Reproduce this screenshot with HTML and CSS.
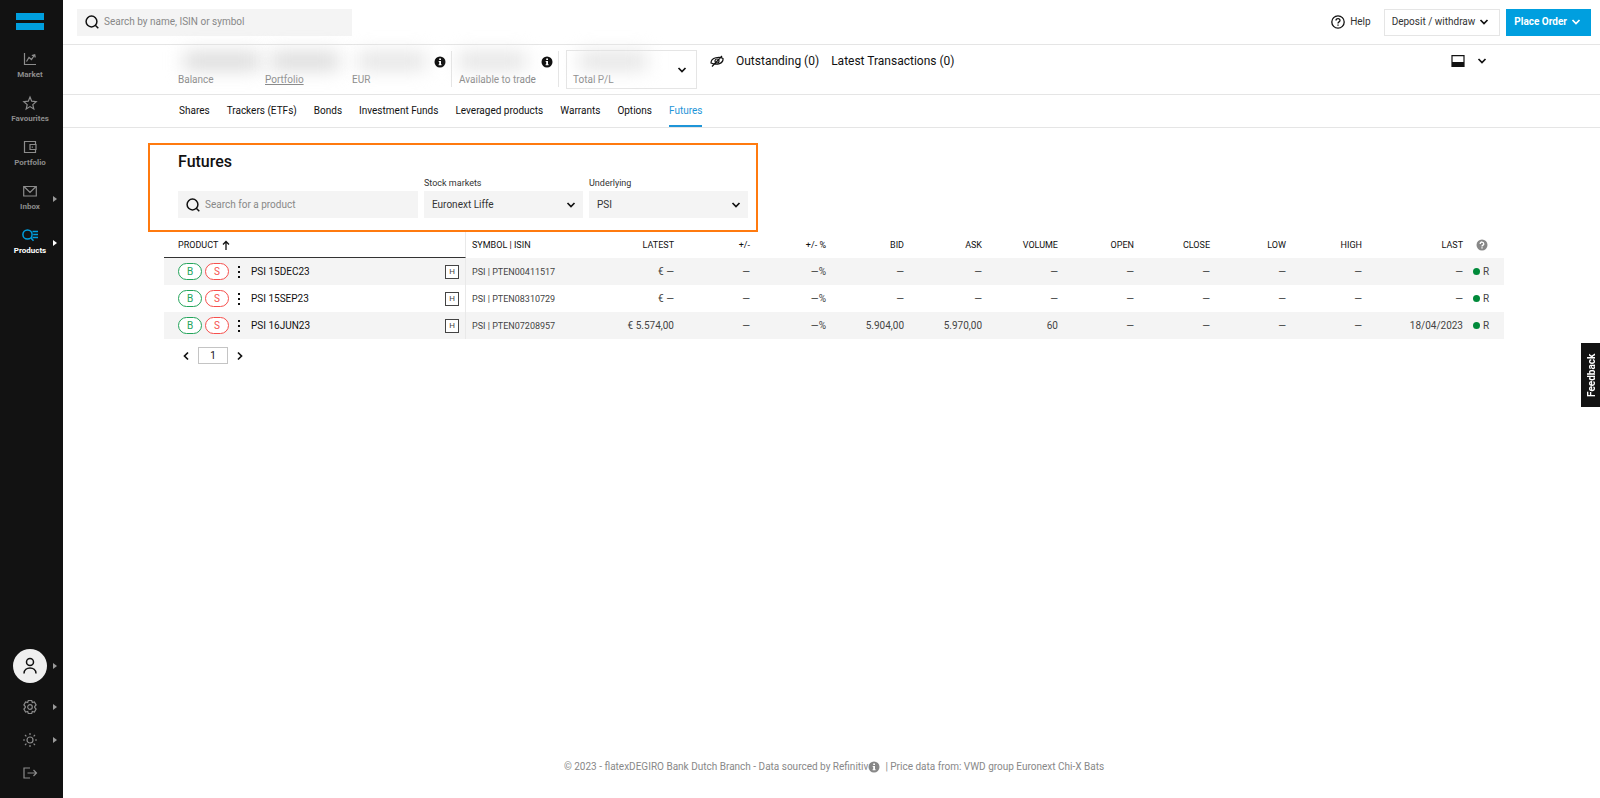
FILE: index.html
```html
<!DOCTYPE html>
<html lang="en">
<head>
<meta charset="utf-8">
<title>Futures</title>
<link rel="stylesheet" href="styles.css">
</head>
<body>
<svg class="defs" aria-hidden="true">
  <symbol id="chevron" viewBox="0 0 10 10"><path d="M1.500 3 5 6.500 8.500 3" fill="none" stroke="currentColor" stroke-width="1.700"/></symbol>
  <symbol id="search" viewBox="0 0 14 14"><circle cx="6.500" cy="6.500" r="5.400" fill="none" stroke="currentColor" stroke-width="1.500"/><path d="m10 10 3.300 3.200" stroke="currentColor" stroke-width="1.500"/></symbol>
  <symbol id="info" viewBox="0 0 12 12"><circle cx="6" cy="6" r="5.500" fill="currentColor"/><path d="M5.200 2.500h1.800v1.500H5.200zM4.700 5h2.300v3.300h.6v1H4.600v-1h.6V6h-.5z" fill="#fff"/></symbol>
</svg>
<div class="app">
  <nav class="sidebar" aria-label="Main">
    <a class="logo" href="#" aria-label="Home"><span class="logo-bar"></span><span class="logo-bar"></span></a>
    <a class="nav-item" href="#">
      <svg class="nav-icon" viewBox="0 0 16 16"><path d="M2.500 2v11.500H14M4.500 10.500l2.500-4 2.500 2L12.500 4M9.800 4.500l2.900-.8.600 2.800" /></svg>Market</a>
    <a class="nav-item" href="#">
      <svg class="nav-icon" viewBox="0 0 16 16"><path d="m8 2 1.700 4.200 4.500.4-3.400 3 1 4.300L8 11.600l-3.800 2.300 1-4.300-3.400-3 4.500-.4z"/></svg>Favourites</a>
    <a class="nav-item" href="#">
      <svg class="nav-icon" viewBox="0 0 16 16"><path d="M13.500 5.500v-3h-11v11h11v-3M14 5.500H8v5h6zM10.300 7.500v1.200"/></svg>Portfolio</a>
    <a class="nav-item has-more" href="#">
      <svg class="nav-icon" viewBox="0 0 16 16"><path d="M1.700 3.500h12.600v9.500H1.700zM2.500 4 8 9.500 13.500 4"/></svg>Inbox</a>
    <a class="nav-item has-more current" href="#" aria-current="page">
      <svg class="nav-icon" viewBox="0 0 16 16"><circle cx="5.500" cy="7.500" r="4.600"/><path d="m9 11 2.500 2.800M10.500 4.500H16M11.200 7.500H16M10.500 10.500H16"/></svg>Products</a>
    <div class="nav-bottom">
      <a class="tool avatar-row has-more" href="#" aria-label="Account"><span class="avatar"><svg viewBox="0 0 18 18"><circle cx="9" cy="5" r="3.500"/><path d="M3 16.500c0-7.300 12-7.300 12 0"/></svg></span></a>
      <a class="tool has-more" href="#" aria-label="Settings"><svg class="nav-icon" viewBox="0 0 16 16"><path d="M6.300 1.500h3.400l.6 2 2.100-.5 1.700 3L12.700 7.500v1l1.400 1.500-1.700 3-2.100-.5-.6 2H6.300l-.6-2-2.100.5-1.700-3 1.400-1.500v-1L1.900 6l1.700-3 2.100.5z"/><circle cx="8" cy="8" r="2.300"/></svg></a>
      <a class="tool has-more" href="#" aria-label="Theme"><svg class="nav-icon" viewBox="0 0 16 16"><circle cx="8" cy="8" r="3"/><path d="M8 1v2M8 13v2M1 8h2M13 8h2M3 3l1.400 1.400M11.600 11.600 13 13M13 3l-1.400 1.400M4.400 11.600 3 13"/></svg></a>
      <a class="tool" href="#" aria-label="Log out"><svg class="nav-icon" viewBox="0 0 16 16"><path d="M8 3H2v10h6M5.500 8H14.500M11.500 5l3 3-3 3"/></svg></a>
    </div>
  </nav>
  <div class="page">
    <header class="topbar">
      <label class="field global-search"><svg class="i14"><use href="#search"/></svg><input class="field-input" type="text" aria-label="Search" placeholder="Search by name, ISIN or symbol"></label>
      <div class="top-actions">
        <a class="help" href="#"><svg class="i14" viewBox="0 0 14 14" fill="none" stroke="currentColor" stroke-width="1.300"><circle cx="7" cy="7" r="6.200"/><path d="M5 5.500c0-2.500 4-2.500 4 0C9 7 7 6.800 7 8.400M7 9.500v1.300"/></svg>Help</a>
        <button class="btn" type="button">Deposit / withdraw<svg class="i10"><use href="#chevron"/></svg></button>
        <button class="btn btn-primary" type="button">Place Order<svg class="i10"><use href="#chevron"/></svg></button>
      </div>
    </header>
    <section class="account" aria-label="Account summary">
      <div class="stat"><span class="masked masked-wide"></span>Balance</div>
      <div class="stat"><span class="masked"></span><a href="#">Portfolio</a></div>
      <div class="stat stat-ruled"><span class="masked masked-light"></span><svg class="i12 stat-info"><use href="#info"/></svg>EUR</div>
      <div class="stat stat-ruled"><span class="masked masked-light"></span><svg class="i12 stat-info"><use href="#info"/></svg>Available to trade</div>
      <button class="total" type="button"><span class="total-text"><span class="masked masked-light"></span>Total P/L</span><svg class="i10"><use href="#chevron"/></svg></button>
      <div class="account-links">
        <svg class="i14" viewBox="0 0 14 14" fill="none" stroke="currentColor" stroke-width="1.200"><path d="M1 9c0-6 9-6.500 12-4.500C13.500 9.500 7 11.500 1 9zM2 12.500 12 2"/><circle cx="7" cy="7" r="2"/></svg>
        <a href="#">Outstanding (0)</a>
        <a href="#">Latest Transactions (0)</a>
      </div>
      <button class="layout-switch" type="button" aria-label="Layout"><svg class="i14" viewBox="0 0 14 14"><path d="M1 1.600h12v10.800H1z" fill="none" stroke="currentColor" stroke-width="1.200"/><path d="M1 8h12v5H1z" fill="currentColor"/></svg><svg class="i10"><use href="#chevron"/></svg></button>
    </section>
    <nav class="tabs" aria-label="Products">
      <a href="#">Shares</a><a href="#">Trackers (ETFs)</a><a href="#">Bonds</a><a href="#">Investment Funds</a><a href="#">Leveraged products</a><a href="#">Warrants</a><a href="#">Options</a><a class="active" href="#">Futures</a>
    </nav>
    <main class="content">
      <section class="filters">
        <h1>Futures</h1>
        <div class="filter-row">
          <label class="field product-search"><svg class="i14"><use href="#search"/></svg><input class="field-input" type="text" aria-label="Search for a product" placeholder="Search for a product"></label>
          <label class="filter">Stock markets<span class="select"><select><option>Euronext Liffe</option></select><svg class="i10"><use href="#chevron"/></svg></span></label>
          <label class="filter">Underlying<span class="select"><select><option>PSI</option></select><svg class="i10"><use href="#chevron"/></svg></span></label>
        </div>
      </section>
      <div class="results">
        <table>
          <colgroup><col class="c-product"><col class="c-symbol"><col class="c-latest"><col class="c-num"><col class="c-num"><col class="c-quote"><col class="c-quote"><col class="c-num"><col class="c-num"><col class="c-num"><col class="c-num"><col class="c-num"><col class="c-last"><col class="c-flag"></colgroup>
          <thead><tr><th class="sorted">PRODUCT<svg class="sort" viewBox="0 0 8 10"><path d="M4 10V1.500M1 4.500l3-3 3 3" fill="none" stroke="currentColor" stroke-width="1.300"/></svg></th><th class="symbol">SYMBOL | ISIN</th><th>LATEST</th><th>+/-</th><th>+/- %</th><th>BID</th><th>ASK</th><th>VOLUME</th><th>OPEN</th><th>CLOSE</th><th>LOW</th><th>HIGH</th><th>LAST</th><th class="flag"><svg class="hint" viewBox="0 0 12 12"><circle cx="6" cy="6" r="5.500" fill="#888"/><path d="M4.200 4.900c0-2.600 3.600-2.400 3.600 0C7.800 6.200 6 6 6 7.400M6 8.300v1.300" fill="none" stroke="#fff" stroke-width="1.300"/></svg></th></tr></thead>
          <tbody>
            <tr><td><div class="product"><button class="trade buy" type="button">B</button><button class="trade sell" type="button">S</button><button class="dots" type="button" aria-label="More"><i></i><i></i><i></i></button><a href="#">PSI 15DEC23</a><span class="tag">H</span></div></td><td class="symbol">PSI | PTEN00411517</td><td>€ —</td><td>—</td><td>—%</td><td>—</td><td>—</td><td>—</td><td>—</td><td>—</td><td>—</td><td>—</td><td>—</td><td class="flag"><span class="dot"></span>R</td></tr>
            <tr><td><div class="product"><button class="trade buy" type="button">B</button><button class="trade sell" type="button">S</button><button class="dots" type="button" aria-label="More"><i></i><i></i><i></i></button><a href="#">PSI 15SEP23</a><span class="tag">H</span></div></td><td class="symbol">PSI | PTEN08310729</td><td>€ —</td><td>—</td><td>—%</td><td>—</td><td>—</td><td>—</td><td>—</td><td>—</td><td>—</td><td>—</td><td>—</td><td class="flag"><span class="dot"></span>R</td></tr>
            <tr><td><div class="product"><button class="trade buy" type="button">B</button><button class="trade sell" type="button">S</button><button class="dots" type="button" aria-label="More"><i></i><i></i><i></i></button><a href="#">PSI 16JUN23</a><span class="tag">H</span></div></td><td class="symbol">PSI | PTEN07208957</td><td>€ 5.574,00</td><td>—</td><td>—%</td><td>5.904,00</td><td>5.970,00</td><td>60</td><td>—</td><td>—</td><td>—</td><td>—</td><td>18/04/2023</td><td class="flag"><span class="dot"></span>R</td></tr>
          </tbody>
        </table>
        <div class="pager">
          <button type="button" aria-label="Previous page"><svg class="i10 prev"><use href="#chevron"/></svg></button>
          <input type="text" value="1" aria-label="Page">
          <button type="button" aria-label="Next page"><svg class="i10 next"><use href="#chevron"/></svg></button>
        </div>
      </div>
    </main>
    <footer class="footer">© 2023 - flatexDEGIRO Bank Dutch Branch - Data sourced by Refinitiv<svg class="i12"><use href="#info"/></svg><span>| Price data from: VWD group Euronext Chi-X Bats</span></footer>
  </div>
  <button class="feedback" type="button">Feedback</button>
</div>
</body>
</html>
```
FILE: styles.css
```css
* { box-sizing: border-box; }
body { margin: 0; font: 10px/14px Roboto, "Liberation Sans", sans-serif; color: #111; background: #fff; }
a { color: inherit; text-decoration: none; }
button, input, select { font: inherit; color: inherit; }
button { padding: 0; border: 0; background: none; }
svg { flex: none; }
.defs { display: none; }
.i10 { width: 10px; height: 10px; }
.i12 { width: 12px; height: 12px; }
.i14 { width: 14px; height: 14px; }

.app { display: flex; min-height: 100vh; }
.page { flex: 1; display: flex; flex-direction: column; min-width: 0; }

/* Sidebar */
.sidebar { width: 63px; background: #121212; color: #8c8c8c; padding-top: 13px; display: flex; flex-direction: column; }
.logo { display: flex; flex-direction: column; gap: 3px; width: 28px; margin: 0 16px 15px; }
.logo-bar { height: 7px; background: #009fdf; }
.nav-item { position: relative; height: 44px; padding: 6px 3px 0 0; display: flex; flex-direction: column; align-items: center; font-size: 8px; line-height: 12px; font-weight: 700; gap: 2px; }
.nav-icon { width: 16px; height: 16px; fill: none; stroke: currentColor; stroke-width: 1.2; }
.has-more::after { content: ""; position: absolute; right: 6px; top: 50%; margin-top: -3px; border: solid transparent; border-width: 3px 0 3px 4px; border-left-color: #9a9a9a; }
.current { color: #fff; }
.current .nav-icon { color: #009fdf; stroke-width: 1.5; }
.current::after { border-left-color: #fff; }
.nav-bottom { margin-top: auto; padding-bottom: 9px; }
.tool { position: relative; height: 33px; padding-right: 3px; display: flex; align-items: center; justify-content: center; }
.avatar-row { height: 48px; }
.avatar { width: 34px; height: 34px; border-radius: 50%; background: #efefef; display: flex; align-items: center; justify-content: center; }
.avatar svg { width: 18px; height: 18px; fill: none; stroke: #111; stroke-width: 1.5; }

/* Top bar */
.topbar { height: 45px; border-bottom: 1px solid #e5e5e5; padding: 0 9px 0 14px; display: flex; align-items: center; justify-content: space-between; }
.field { display: flex; align-items: center; gap: 5px; height: 27px; padding-left: 8px; background: #f4f4f4; }
.field-input { flex: 1; min-width: 0; border: 0; padding: 0; background: none; outline: 0; }
.field-input::placeholder { color: #888; opacity: 1; }
.global-search { width: 275px; }
.top-actions { display: flex; align-items: center; gap: 6px; color: #333; }
.top-actions svg { color: #111; }
.help { display: flex; align-items: center; gap: 5px; margin-right: 7px; }
.btn { height: 27px; padding: 0 10px 0 7px; border: 1px solid #e5e5e5; display: flex; align-items: center; gap: 4px; }
.btn-primary { padding-right: 9px; background: #009fdf; border-color: #009fdf; color: #fff; font-weight: 700; }
.btn-primary svg { color: #fff; }

/* Account summary */
.account { height: 50px; border-bottom: 1px solid #e5e5e5; padding: 5px 113px 4px 115px; display: flex; align-items: flex-start; color: #888; }
.stat { position: relative; width: 87px; height: 36px; padding-top: 22px; margin-top: 1px; }
.stat a { text-decoration: underline; }
.stat-ruled { width: 100px; border-right: 1px solid #e5e5e5; }
.stat-ruled + .stat-ruled { width: 107px; padding-left: 7px; }
.stat-info { position: absolute; right: 5px; top: 5px; color: #111; }
.masked { position: absolute; left: 6px; top: 1px; width: 68px; height: 18px; background: #dadada; filter: blur(9px); }
.masked-wide { width: 76px; }
.masked-light { background: #e4e4e4; }
.total { width: 131px; height: 39px; margin-left: 7px; padding: 0 9px 0 6px; border: 1px solid #e5e5e5; display: flex; align-items: center; justify-content: space-between; }
.total .i10 { color: #111; }
.total-text { position: relative; height: 37px; padding-top: 22px; }
.account-links { display: flex; align-items: center; gap: 12px; margin: 4px 0 0 13px; color: #111; font-size: 12px; }
.layout-switch { display: flex; align-items: center; gap: 12px; margin: 4px 0 0 auto; color: #111; }

/* Product tabs */
.tabs { height: 33px; border-bottom: 1px solid #e5e5e5; padding-left: 116px; display: flex; gap: 17px; line-height: 32px; }
.tabs .active { color: #1e95d8; border-bottom: 2px solid #1e95d8; }

/* Filters */
.content { flex: 1; padding: 15px 96px 0 85px; }
.filters { width: 610px; border: 2px solid #ff7a0f; padding: 7px 8px 12px 28px; }
.filters h1 { margin: 0; font-size: 16px; line-height: 20px; font-weight: 500; }
.filter-row { display: flex; align-items: flex-end; gap: 6px; margin-top: 4px; }
.product-search { flex: 1; }
.filter { width: 159px; font-size: 9px; line-height: 15px; color: #333; }
.select { position: relative; display: block; font-size: 10px; }
.select select { appearance: none; display: block; width: 100%; height: 27px; border: 0; border-radius: 0; background: #f4f4f4; padding: 0 24px 0 8px; }
.select .i10 { position: absolute; right: 7px; top: 9px; pointer-events: none; color: #111; }

/* Results table */
.results { padding-left: 16px; }
table { width: 100%; table-layout: fixed; border-collapse: separate; border-spacing: 0; }
.c-product { width: 302px; }
.c-symbol { width: 94px; }
.c-latest { width: 114px; }
.c-num { width: 76px; }
.c-quote { width: 78px; }
.c-last { width: 101px; }
.c-flag { width: 41px; }
th, td { padding: 0; height: 27px; text-align: right; white-space: nowrap; font-weight: 400; }
th { height: 26px; font-size: 9px; }
td { color: #444; }
th:first-child, td:first-child { text-align: left; border-right: 1px solid #e9e9e9; }
th.sorted { padding-left: 14px; border-bottom: 1px solid #333; }
.symbol { text-align: left; padding-left: 6px; font-size: 9px; }
.sort { width: 8px; height: 10px; margin-left: 4px; vertical-align: -2px; }
tbody tr:nth-child(odd) { background: #f4f4f4; }
.flag { text-align: left; padding-left: 10px; }
th.flag { padding-left: 13px; }
.hint { display: block; width: 12px; height: 12px; }
.dot { display: inline-block; width: 7px; height: 7px; border-radius: 50%; background: #008a3a; margin-right: 3px; }
.product { display: flex; align-items: center; padding: 0 6px 0 14px; color: #111; }
.trade { width: 24px; height: 17px; border: 1px solid; border-radius: 9px; background: #fff; line-height: 15px; margin-right: 3px; }
.buy { color: #23a45a; }
.sell { color: #f6504d; }
.dots { display: flex; flex-direction: column; gap: 3px; padding: 0 6px; margin-right: 5px; }
.dots i { width: 2px; height: 2px; background: #111; }
.tag { width: 14px; height: 14px; border: 1px solid #444; margin-left: auto; font-size: 8px; line-height: 12px; text-align: center; color: #444; background: #fff; }

.pager { display: flex; align-items: center; gap: 7px; padding: 8px 0 0 17px; }
.pager button { display: flex; }
.pager input { width: 30px; height: 17px; padding: 0; border: 1px solid #c4c4c4; text-align: center; }
.prev { transform: rotate(90deg); }
.next { transform: rotate(-90deg); }

.footer { display: flex; justify-content: center; align-items: center; padding: 0 0 24px 5px; color: #888; }
.footer span { margin-left: 5px; }
.feedback { position: fixed; right: 0; top: 343px; width: 19px; height: 64px; padding-right: 4px; background: #121212; color: #fff; font-weight: 700; line-height: 14px; writing-mode: vertical-rl; transform: rotate(180deg); text-align: center; }
```
